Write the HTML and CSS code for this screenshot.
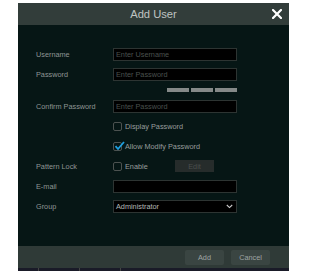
FILE: index.html
```html
<!DOCTYPE html>
<html>
<head>
<meta charset="utf-8">
<link rel="stylesheet" href="styles.css">
</head>
<body>
<div class="dialog">
  <div class="header">
    <span class="title">Add User</span>
    <svg class="close" width="10" height="10" viewBox="0 0 10 10"><path d="M1 1L9 9M9 1L1 9" stroke="#fff" stroke-width="2.2" stroke-linecap="square"/></svg>
  </div>
  <div class="body">
    <div class="row"><span class="label">Username</span><div class="input ph">Enter Username</div></div>
    <div class="row"><span class="label">Password</span><div class="input ph">Enter Password</div></div>
    <div class="strength"><span class="bar"></span><span class="bar"></span><span class="bar"></span></div>
    <div class="row"><span class="label">Confirm Password</span><div class="input ph">Enter Password</div></div>
    <div class="row"><span class="label"></span><span class="check"></span><span class="ctext">Display Password</span></div>
    <div class="row"><span class="label"></span><span class="check checked"><svg width="11" height="10" viewBox="0 0 11 10"><path d="M1.5 5.2L4 8L10 1" fill="none" stroke="#1ea0e0" stroke-width="1.8"/></svg></span><span class="ctext">Allow Modify Password</span></div>
    <div class="row"><span class="label">Pattern Lock</span><span class="check"></span><span class="ctext enable">Enable</span><span class="edit">Edit</span></div>
    <div class="row"><span class="label">E-mail</span><div class="input"></div></div>
    <div class="row"><span class="label">Group</span><div class="input select"><span>Administrator</span><svg width="7" height="5" viewBox="0 0 7 5"><path d="M0.8 1L3.5 3.6L6.2 1" fill="none" stroke="#ccc" stroke-width="1.1"/></svg></div></div>
  </div>
  <div class="footer">
    <span class="btn">Add</span>
    <span class="btn">Cancel</span>
  </div>
  <div class="under"><span class="seg"></span><span class="seg"></span><span class="seg"></span></div>
</div>
</body>
</html>
```
FILE: styles.css
```css
* { box-sizing: border-box; }
body {
  margin: 0;
  background: #fff;
  font-family: "Liberation Sans", Arial, sans-serif;
}
.dialog {
  margin: 3px 0 0 18px;
  width: 271px;
}
.header {
  height: 22px;
  background: #323d3a;
  display: flex;
  align-items: center;
  justify-content: center;
  position: relative;
}
.title {
  color: #bfc3c2;
  font-size: 11.2px;
}
.close {
  position: absolute;
  right: 7px;
  top: 6px;
}
.body {
  background: #061615;
  height: 221px;
  padding: 19px 0 0 18px;
  display: flex;
  flex-direction: column;
}
.row {
  height: 20px;
  display: flex;
  align-items: center;
}
.label {
  width: 77px;
  color: #8e9594;
  font-size: 7.3px;
  flex-shrink: 0;
}
.input {
  width: 124px;
  height: 13px;
  background: #000;
  border: 1px solid #2d3432;
  font-size: 7.3px;
  color: #b4b8b7;
  padding-left: 2px;
  display: flex;
  align-items: center;
}
.input.ph { color: #4a504e; }
.strength {
  height: 12px;
  padding: 4px 0 0 131px;
  display: flex;
  gap: 2px;
}
.bar {
  width: 22px;
  height: 4px;
  background: #858988;
}
.check {
  width: 9px;
  height: 9px;
  border: 1px solid #4c5250;
  border-radius: 2px;
  position: relative;
  flex-shrink: 0;
}
.check svg {
  position: absolute;
  left: 0;
  top: -2px;
}
.ctext {
  color: #979d9c;
  font-size: 7.3px;
  margin-left: 3px;
}
.enable { width: 50px; }
.edit {
  width: 39px;
  height: 12px;
  background: #262c2b;
  color: #4a4f4e;
  font-size: 7.3px;
  display: flex;
  align-items: center;
  justify-content: center;
}
.select { justify-content: space-between; padding-right: 3px; }
.footer {
  height: 22px;
  background: #2f3a37;
  display: flex;
  align-items: center;
  justify-content: flex-end;
  gap: 7px;
  padding-right: 19px;
}
.btn {
  width: 39px;
  height: 15px;
  background: #3a4542;
  border-radius: 2px;
  color: #9ea4a3;
  font-size: 7.3px;
  display: flex;
  align-items: center;
  justify-content: center;
}
.under {
  height: 3px;
  background: #1a1b28;
  display: flex;
}
.seg { width: 1px; background: #444; margin-left: 20px; }
.seg + .seg { margin-left: 40px; }
```
